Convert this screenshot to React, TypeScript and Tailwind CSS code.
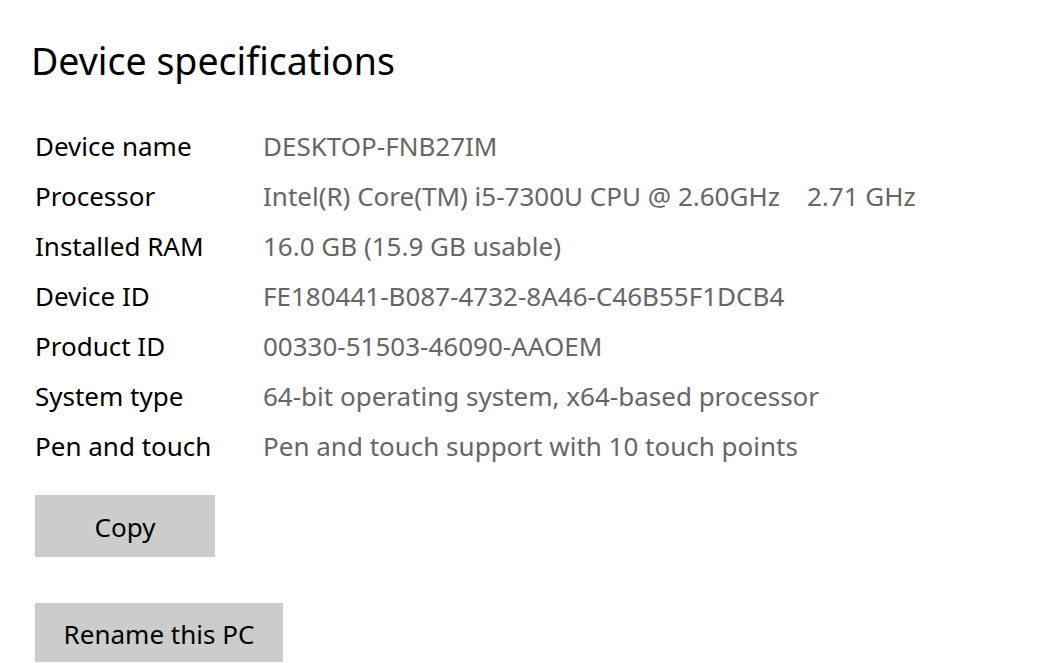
import React from 'react';

const specs: { label: string; value: string }[] = [
  { label: 'Device name', value: 'DESKTOP-FNB27IM' },
  { label: 'Processor', value: 'Intel(R) Core(TM) i5-7300U CPU @ 2.60GHz    2.71 GHz' },
  { label: 'Installed RAM', value: '16.0 GB (15.9 GB usable)' },
  { label: 'Device ID', value: 'FE180441-B087-4732-8A46-C46B55F1DCB4' },
  { label: 'Product ID', value: '00330-51503-46090-AAOEM' },
  { label: 'System type', value: '64-bit operating system, x64-based processor' },
  { label: 'Pen and touch', value: 'Pen and touch support with 10 touch points' },
];

export default function App() {
  return (
    <div
      className="w-[1060px] h-[663px] overflow-hidden bg-white text-black"
      style={{ fontFamily: '"Noto Sans", "Open Sans", sans-serif' }}
    >
      <div className="pl-[31px] pt-[37px]">
        <h1 className="text-[37.5px] leading-[48px] font-normal">Device specifications</h1>
      </div>

      <div className="pl-[35px] mt-[36px] flex flex-col">
        {specs.map((s) => (
          <div key={s.label} className="flex h-[50px] items-center">
            <div className="w-[228px] text-[26px] leading-none">{s.label}</div>
            <div className="text-[26px] leading-none text-[#666666] whitespace-pre">{s.value}</div>
          </div>
        ))}
      </div>

      <div className="pl-[35px] mt-[24px] flex flex-col items-start gap-[46px]">
        <button className="w-[180px] h-[62px] pt-[2px] bg-[#cccccc] text-[26px] text-black">Copy</button>
        <button className="w-[248px] h-[59px] pt-[4px] bg-[#cccccc] text-[26px] text-black">Rename this PC</button>
      </div>
    </div>
  );
}
